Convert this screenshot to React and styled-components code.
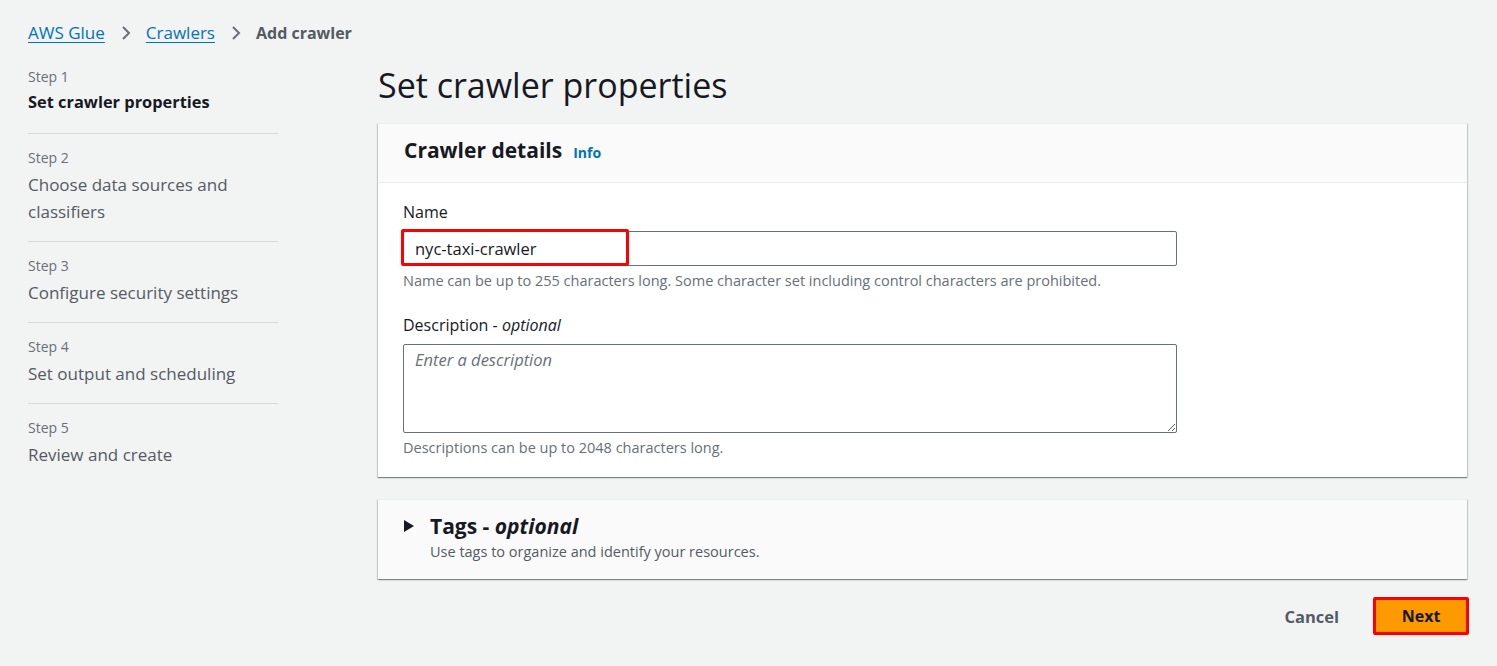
import React from 'react'
import styled, { createGlobalStyle } from 'styled-components'

const GlobalStyle = createGlobalStyle`
    body {
        margin: 0;
        background: #f2f3f3;
        font-family: "Open Sans", "Noto Sans", sans-serif;
        color: #16191f;
    }
`

const Page = styled.div`
    padding: 21px 30px 0 28px;
`

const Breadcrumbs = styled.nav`
    display: flex;
    align-items: center;
    height: 24px;
    font-size: 17px;
    line-height: 24px;
`

const Crumb = styled.a`
    color: #0073bb;
    text-decoration: underline;
    text-underline-offset: 3px;
`

const Current = styled.span`
    color: #545b64;
    font-size: 16px;
    font-weight: 700;
`

const Chevron = styled.svg`
    width: 16px;
    height: 16px;
    margin: 0 12px 0 13px;
`

const Layout = styled.div`
    display: grid;
    grid-template-columns: 250px 1fr;
    column-gap: 100px;
    margin-top: 20px;
`

const StepList = styled.ol`
    list-style: none;
    margin: 0;
    padding: 1px 0 0;
`

const StepItem = styled.li`
    padding: ${props => props.first ? '0 0 18px' : '13px 0 16px'};
    border-bottom: ${props => props.last ? 'none' : '1px solid #d5dbdb'};
`

const StepLabel = styled.div`
    font-size: 14px;
    line-height: 22px;
    color: #687078;
`

const StepTitle = styled.div`
    margin-top: ${props => props.active ? 0 : 2}px;
    font-size: ${props => props.active ? 16.4 : 17}px;
    line-height: 27px;
    color: ${props => props.active ? '#16191f' : '#545b64'};
    font-weight: ${props => props.active ? 700 : 400};
`

const Main = styled.main`
    display: flex;
    flex-direction: column;
`

const PageTitle = styled.h1`
    margin: 0 0 18px;
    font-size: 34px;
    line-height: 40px;
    font-weight: 400;
    color: #16191f;
`

const Card = styled.section`
    background: #ffffff;
    border-top: 1px solid #eaeded;
    box-shadow: 0 1px 1px 0 rgba(0, 28, 36, 0.3), 1px 1px 1px 0 rgba(0, 28, 36, 0.15), -1px 1px 1px 0 rgba(0, 28, 36, 0.15);
    margin-bottom: ${props => props.gap || 0}px;
`

const CardHeader = styled.header`
    display: flex;
    align-items: baseline;
    gap: 11px;
    background: #fafafa;
    padding: 11px 26px 17px;
    border-bottom: 1px solid #eaeded;
`

const CardTitle = styled.h2`
    margin: 0;
    font-size: 21px;
    line-height: 30px;
    font-weight: 700;
    color: #16191f;
`

const InfoLink = styled.a`
    font-size: 14px;
    font-weight: 700;
    color: #0073bb;
`

const CardBody = styled.div`
    padding: 18px 25px 20px;
`

const Field = styled.div`
    margin-top: ${props => props.offset || 0}px;
`

const Label = styled.label`
    display: block;
    font-size: 16px;
    line-height: 22px;
    margin-bottom: 8px;
    color: #16191f;

    em {
        font-style: italic;
    }
`

const InputWrap = styled.div`
    position: relative;
    width: 774px;
`

const TextInput = styled.input`
    box-sizing: border-box;
    width: 100%;
    height: 35px;
    padding: 0 11px;
    border: 1px solid #687078;
    border-radius: 2px;
    font-family: inherit;
    font-size: 16.5px;
    color: #16191f;
    background: #ffffff;
    outline: none;
`

const TextArea = styled.textarea`
    display: block;
    box-sizing: border-box;
    width: 100%;
    height: 89px;
    padding: 4px 11px;
    border: 1px solid #687078;
    border-radius: 2px;
    font-family: inherit;
    font-size: 16.5px;
    line-height: 22px;
    color: #16191f;
    resize: vertical;
    outline: none;

    &::placeholder {
        color: #687078;
        font-style: italic;
    }
`

const Highlight = styled.div`
    position: absolute;
    left: -2px;
    top: -2px;
    width: 228px;
    height: 37px;
    box-sizing: border-box;
    border: 3px solid #ff0000;
    border-radius: 2px;
    pointer-events: none;
`

const Hint = styled.div`
    margin-top: 6px;
    font-size: 14.5px;
    line-height: 18px;
    color: #687078;
`

const Expander = styled.div`
    display: flex;
    align-items: flex-start;
    padding: 11px 26px 18px 26px;
    background: #fafafa;
`

const Caret = styled.svg`
    width: 10px;
    height: 12px;
    margin: 9px 16px 0 0;
    flex-shrink: 0;
`

const ExpanderTitle = styled.h2`
    margin: 0;
    font-size: 21px;
    line-height: 30px;
    font-weight: 700;

    em {
        font-style: italic;
    }
`

const ExpanderSub = styled.div`
    margin-top: 2px;
    font-size: 14.5px;
    line-height: 18px;
    color: #545b64;
`

const Actions = styled.div`
    display: flex;
    justify-content: flex-end;
    align-items: center;
    gap: 34px;
    margin-top: 18px;
    margin-right: -2px;
`

const LinkButton = styled.button`
    border: none;
    background: none;
    padding: 0;
    font-family: inherit;
    font-size: 16.5px;
    font-weight: 700;
    color: #545b64;
`

const PrimaryButton = styled.button`
    box-sizing: border-box;
    width: 96px;
    height: 38px;
    border: 3px solid #ff0000;
    border-radius: 2px;
    background: #ff9900;
    font-family: inherit;
    font-size: 16px;
    font-weight: 700;
    color: #16191f;
`

const steps = [
    { title: 'Set crawler properties' },
    { title: 'Choose data sources and classifiers' },
    { title: 'Configure security settings' },
    { title: 'Set output and scheduling' },
    { title: 'Review and create' },
]

const ChevronIcon = () => (
    <Chevron viewBox='0 0 16 16' fill='none' stroke='#687078' strokeWidth='2'>
        <path d='M5 2l6 6-6 6' />
    </Chevron>
)

export default function App() {
    return (
        <Page>
            <GlobalStyle />
            <Breadcrumbs>
                <Crumb>AWS Glue</Crumb>
                <ChevronIcon />
                <Crumb>Crawlers</Crumb>
                <ChevronIcon />
                <Current>Add crawler</Current>
            </Breadcrumbs>

            <Layout>
                <StepList>
                    {steps.map((step, i) => (
                        <StepItem key={i} first={i === 0} last={i === steps.length - 1}>
                            <StepLabel>Step {i + 1}</StepLabel>
                            <StepTitle active={i === 0}>{step.title}</StepTitle>
                        </StepItem>
                    ))}
                </StepList>

                <Main>
                    <PageTitle>Set crawler properties</PageTitle>

                    <Card gap={22}>
                        <CardHeader>
                            <CardTitle>Crawler details</CardTitle>
                            <InfoLink>Info</InfoLink>
                        </CardHeader>
                        <CardBody>
                            <Field>
                                <Label>Name</Label>
                                <InputWrap>
                                    <TextInput defaultValue='nyc-taxi-crawler' />
                                    <Highlight />
                                </InputWrap>
                                <Hint>Name can be up to 255 characters long. Some character set including control characters are prohibited.</Hint>
                            </Field>
                            <Field offset={24}>
                                <Label>Description - <em>optional</em></Label>
                                <InputWrap>
                                    <TextArea placeholder='Enter a description' />
                                </InputWrap>
                                <Hint>Descriptions can be up to 2048 characters long.</Hint>
                            </Field>
                        </CardBody>
                    </Card>

                    <Card>
                        <Expander>
                            <Caret viewBox='0 0 10 12'>
                                <path d='M0 0l10 6-10 6z' fill='#16191f' />
                            </Caret>
                            <div>
                                <ExpanderTitle>Tags - <em>optional</em></ExpanderTitle>
                                <ExpanderSub>Use tags to organize and identify your resources.</ExpanderSub>
                            </div>
                        </Expander>
                    </Card>

                    <Actions>
                        <LinkButton>Cancel</LinkButton>
                        <PrimaryButton>Next</PrimaryButton>
                    </Actions>
                </Main>
            </Layout>
        </Page>
    )
}
